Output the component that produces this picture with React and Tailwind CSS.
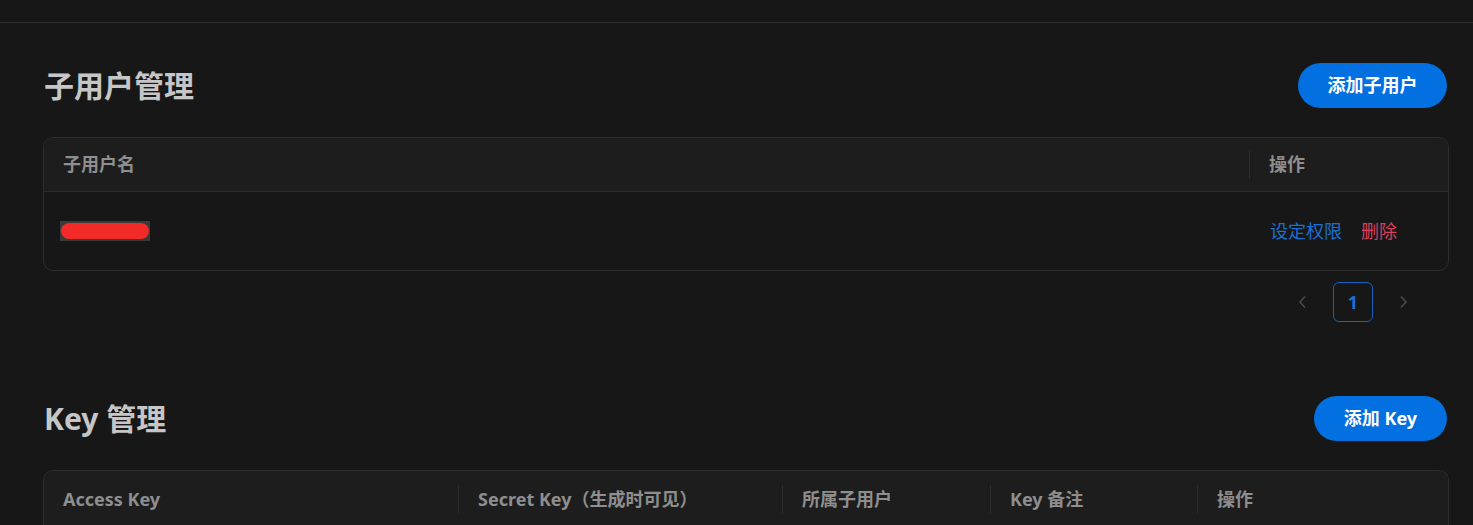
import React from 'react';

const font = { fontFamily: '"Noto Sans", "Noto Sans CJK SC", sans-serif' };

const users = [{ id: 1 }];

const keyCols = [
    { label: 'Access Key', w: 'w-[414px]' },
    { label: 'Secret Key（生成时可见）', w: 'w-[324px]' },
    { label: '所属子用户', w: 'w-[208px]' },
    { label: 'Key 备注', w: 'w-[207px]' },
    { label: '操作', w: 'flex-1' },
];

const SectionHead = ({ title, action, btnW }) => (
    <div className="flex items-center justify-between h-[45px] pr-[2px]">
        <h2 className="text-[30px] font-bold text-[#c6c6c6] leading-none pl-[1px]">{title}</h2>
        <button className={`h-[45px] ${btnW} rounded-full bg-[#0270e0] text-white text-[18px] font-bold`}>
            {action}
        </button>
    </div>
);

const App = () => {
    return (
        <div className="min-h-screen bg-[#171717] text-[#c9c9c9]" style={font}>
            <div className="h-[23px] border-b border-[#2e2e2e]" />

            <div className="pl-[43px] pr-[24px] pt-[40px]">
                <SectionHead title="子用户管理" action="添加子用户" btnW="w-[149px]" />

                <div className="mt-[29px] rounded-[10px] border border-[#2d2d2d] overflow-hidden">
                    <div className="flex items-center h-[54px] bg-[#1d1d1d] border-b border-[#2d2d2d] text-[18px] font-bold text-[#8e8e8e]">
                        <div className="flex-1 pl-[19px]">子用户名</div>
                        <div className="w-[199px] flex items-center">
                            <span className="w-px h-[28px] bg-[#2c2c2c]" />
                            <span className="pl-[19px]">操作</span>
                        </div>
                    </div>
                    {users.map(u => (
                        <div key={u.id} className="flex items-center h-[78px]">
                            <div className="flex-1 pl-[16px]">
                                <div className="w-[90px] h-[20px] bg-[#3a3a3a] flex items-center px-[1px]">
                                    <div className="w-full h-[16px] rounded-full bg-[#f22b28]" />
                                </div>
                            </div>
                            <div className="w-[199px] pl-[21px] flex gap-[19px] text-[18px]">
                                <a className="text-[#1a6fd3] cursor-pointer">设定权限</a>
                                <a className="text-[#d9405f] cursor-pointer">删除</a>
                            </div>
                        </div>
                    ))}
                </div>

                <div className="flex justify-end items-center mt-[11px] pr-[26px] gap-[10px]">
                    <button className="w-[40px] h-[40px] flex items-center justify-center text-[#4a4a4a]">
                        <svg width="10" height="14" viewBox="0 0 10 14" fill="none" stroke="currentColor" strokeWidth="1.6">
                            <path d="M7 1.5 L2 7 L7 12.5" />
                        </svg>
                    </button>
                    <button className="w-[40px] h-[40px] rounded-[6px] border border-[#1660c0] text-[#1a6fd3] text-[18px] font-bold">
                        1
                    </button>
                    <button className="w-[40px] h-[40px] flex items-center justify-center text-[#4a4a4a]">
                        <svg width="10" height="14" viewBox="0 0 10 14" fill="none" stroke="currentColor" strokeWidth="1.6">
                            <path d="M3 1.5 L8 7 L3 12.5" />
                        </svg>
                    </button>
                </div>

                <div className="mt-[74px]">
                    <SectionHead title="Key 管理" action="添加 Key" btnW="w-[133px]" />
                </div>

                <div className="mt-[29px] rounded-t-[10px] border border-b-0 border-[#2d2d2d] overflow-hidden">
                    <div className="flex items-center h-[56px] bg-[#1d1d1d] text-[18px] font-bold text-[#8e8e8e]">
                        {keyCols.map((c, i) => (
                            <div key={c.label} className={`${c.w} flex items-center`}>
                                {i > 0 && <span className="w-px h-[28px] bg-[#2c2c2c]" />}
                                <span className="pl-[19px]">{c.label}</span>
                            </div>
                        ))}
                    </div>
                </div>
            </div>
        </div>
    );
};

export default App;
